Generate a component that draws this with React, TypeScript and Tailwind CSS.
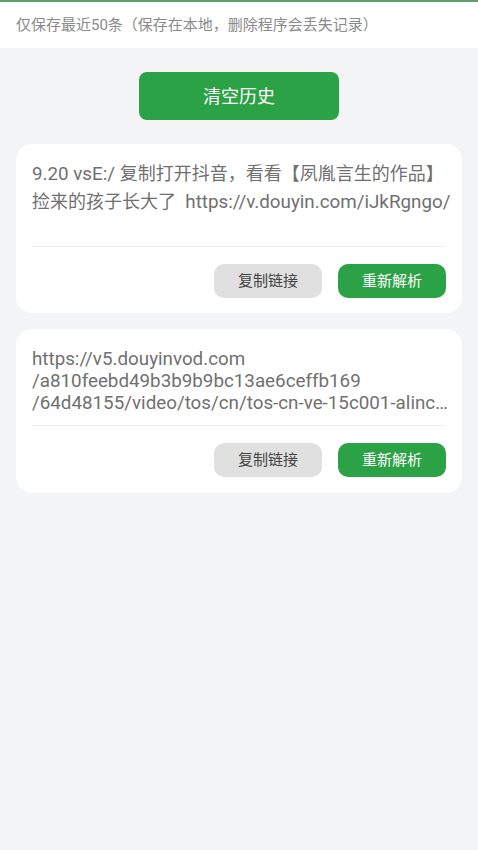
import React from "react";

const font = { fontFamily: 'Roboto, "Noto Sans CJK SC", sans-serif' };

function Buttons() {
  return (
    <div className="mt-[17px] flex justify-end gap-4">
      <button className="h-[34px] w-[108px] rounded-[10px] bg-[#e0e0e0] text-[15px] text-[#444444]">复制链接</button>
      <button className="h-[34px] w-[108px] rounded-[10px] bg-[#2ba245] text-[15px] text-white">重新解析</button>
    </div>
  );
}

export default function App() {
  return (
    <div className="min-h-[850px] bg-[#f3f4f6]" style={font}>
      <div className="h-[2px] bg-[#5f9e6e]" />
      <div className="flex h-[46px] items-center bg-white px-4 text-[15px] text-[#8a8a8a]">
        仅保存最近50条（保存在本地，删除程序会丢失记录）
      </div>
      <div className="flex justify-center pt-6 pb-6">
        <button className="h-[48px] w-[200px] rounded-lg bg-[#2ba245] text-[18px] text-white">清空历史</button>
      </div>
      <div className="flex flex-col gap-4">
        <div className="mx-4 rounded-2xl bg-white px-4 pt-4 pb-[15px]">
          <div className="h-[86px] whitespace-pre text-[18px] leading-[28px] text-[#707070]">
            <div>
              <span className="text-[18.8px]">9.20 vsE:/ </span>复制打开抖音，看看【夙胤言生的作品】
            </div>
            <div>
              捡来的孩子长大了<span className="text-[18.8px]">  https://v.douyin.com/iJkRgngo/</span>
            </div>
          </div>
          <div className="h-px bg-[#eeeeee]" />
          <Buttons />
        </div>
        <div className="mx-4 rounded-2xl bg-white px-4 pt-[19px] pb-4">
          <div className="text-[18.8px] leading-[22px] text-[#707070] whitespace-nowrap">
            <div>https://v5.douyinvod.com</div>
            <div>/a810feebd49b3b9b9bc13ae6ceffb169</div>
            <div>/64d48155/video/tos/cn/tos-cn-ve-15c001-alinc…</div>
          </div>
          <div className="mt-[11px] h-px bg-[#eeeeee]" />
          <Buttons />
        </div>
      </div>
    </div>
  );
}
